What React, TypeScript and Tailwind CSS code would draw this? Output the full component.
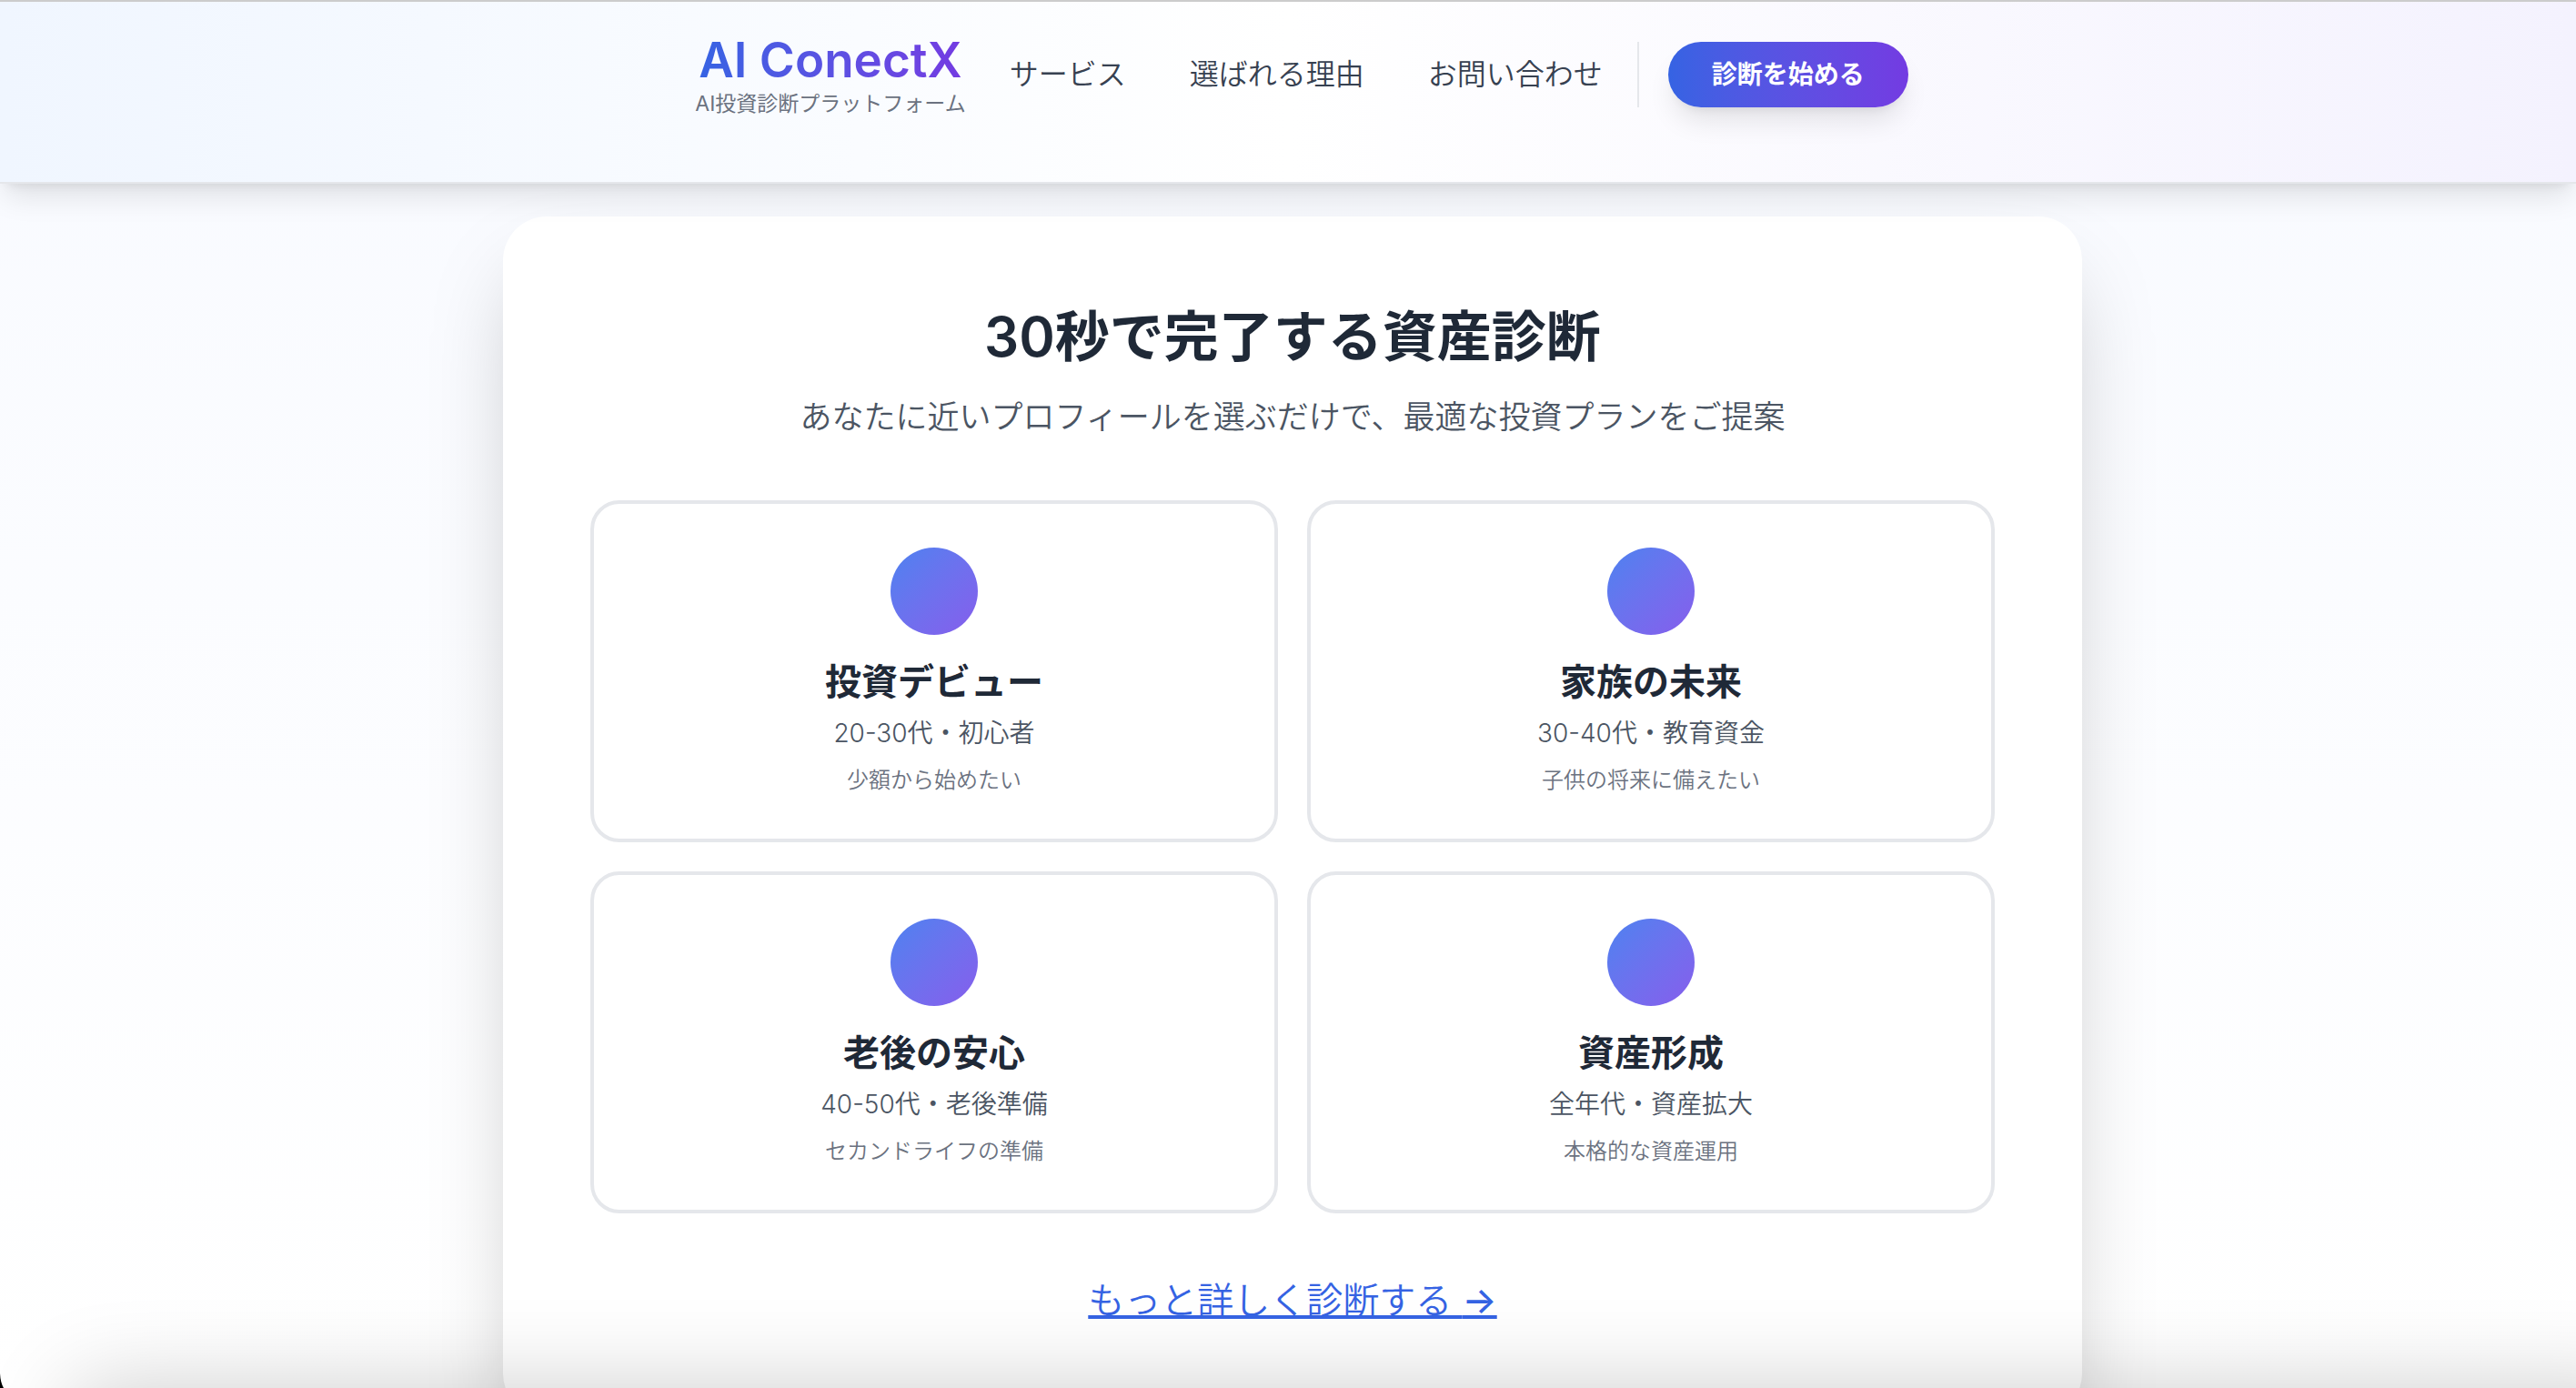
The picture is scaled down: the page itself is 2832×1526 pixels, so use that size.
const navItems = ["サービス", "選ばれる理由", "お問い合わせ"];

type Profile = { title: string; target: string; note: string };

const profiles: Profile[] = [
  { title: "投資デビュー", target: "20-30代・初心者", note: "少額から始めたい" },
  { title: "家族の未来", target: "30-40代・教育資金", note: "子供の将来に備えたい" },
  { title: "老後の安心", target: "40-50代・老後準備", note: "セカンドライフの準備" },
  { title: "資産形成", target: "全年代・資産拡大", note: "本格的な資産運用" },
];

function Header() {
  return (
    <header className="relative z-10 flex h-[202px] items-start justify-center border-t-2 border-b-2 border-t-[#cccccc] border-b-gray-200 bg-linear-to-r from-[#f0f6ff] via-white to-[#f4f2fe] pt-[44px] pl-[30px] shadow-[0_20px_30px_-6px_rgba(0,0,0,0.1),0_8px_12px_-8px_rgba(0,0,0,0.1)]">
      <div className="flex flex-col items-center">
        <a
          href="#"
          className="bg-linear-to-r from-[#3563e3] to-[#733be2] bg-clip-text text-[53px] leading-[40px] font-semibold text-transparent"
        >
          AI ConectX
        </a>
        <span className="mt-2 text-[23px] leading-[40px] text-[#6b7280]">AI投資診断プラットフォーム</span>
      </div>
      <nav className="ml-12 flex items-center">
        <ul className="flex gap-[70px]">
          {navItems.map((item) => (
            <li key={item}>
              <a href="#" className="text-[32px] leading-[48px] font-[350] text-[#374151]">
                {item}
              </a>
            </li>
          ))}
        </ul>
        <div className="ml-[38px] flex border-l-2 border-gray-200 pl-8">
          <button
            type="button"
            className="h-[72px] rounded-full bg-linear-to-r from-[#3563e3] to-[#733be2] px-12 text-[28px] leading-[40px] font-semibold text-white shadow-[0_20px_30px_-6px_rgba(0,0,0,0.1),0_8px_12px_-8px_rgba(0,0,0,0.1)]"
          >
            診断を始める
          </button>
        </div>
      </nav>
    </header>
  );
}

function ProfileCard({ title, target, note }: Profile) {
  return (
    <button
      type="button"
      className="flex flex-col items-center rounded-[32px] border-4 border-gray-200 bg-white p-12 text-center"
    >
      <span className="size-24 rounded-full bg-linear-to-br from-[#4a82f0] to-[#855dec]" />
      <span className="mt-6 text-[40px] leading-[56px] font-bold text-[#1f2937]">{title}</span>
      <span className="mt-2 text-[28px] leading-[40px] font-[350] text-[#4b5563]">{target}</span>
      <span className="mt-4 text-2xl leading-[32px] font-[350] text-[#6b7280]">{note}</span>
    </button>
  );
}

export default function App() {
  return (
    <div
      lang="ja"
      className="relative h-screen overflow-hidden bg-linear-to-b from-[#f8faff] to-white font-['Inter','Noto_Sans_CJK_JP',sans-serif]"
    >
      <Header />
      <main className="flex justify-center pt-9 pl-[10px]">
        <section className="w-full max-w-[1736px] rounded-[48px] bg-white p-24 text-center shadow-[0_50px_100px_-24px_rgba(0,0,0,0.25)]">
          <h1 className="text-[60px] leading-[72px] font-semibold text-[#1f2937]">30秒で完了する資産診断</h1>
          <p className="mt-6 text-[35px] leading-[56px] font-[350] text-[#4b5563]">
            あなたに近いプロフィールを選ぶだけで、最適な投資プランをご提案
          </p>
          <div className="mt-16 grid grid-cols-2 gap-8">
            {profiles.map((profile) => (
              <ProfileCard key={profile.title} {...profile} />
            ))}
          </div>
          <a
            href="#"
            className="mt-16 inline-block text-[40px] leading-[64px] font-[350] text-[#3563e3] underline decoration-4 underline-offset-2 [text-decoration-skip-ink:none]"
          >
            もっと詳しく診断する <span className="font-medium">→</span>
          </a>
        </section>
      </main>
      <div className="pointer-events-none absolute top-full -right-20 left-20 h-40 shadow-[0_0_100px_0_rgba(0,0,0,0.2)]" />
      <svg className="absolute bottom-0 left-0 h-4 w-1" viewBox="0 0 4 16" aria-hidden="true">
        <path d="M0 0 Q0.5 10 4 16 H0 Z" fill="#000" />
      </svg>
    </div>
  );
}
